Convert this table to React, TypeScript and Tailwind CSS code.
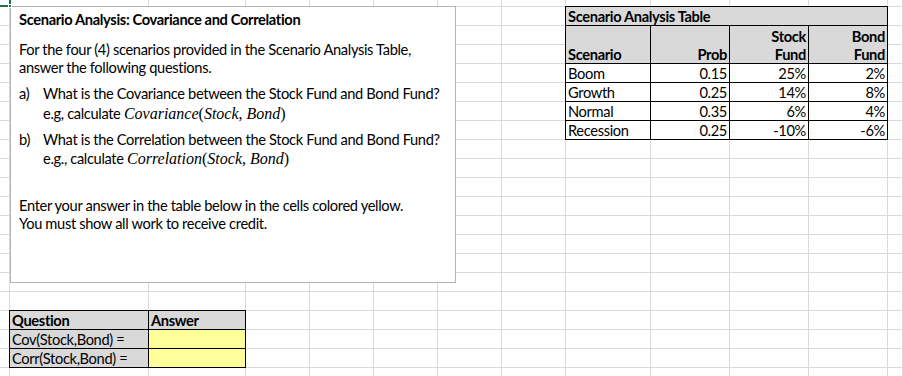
import React from 'react';

// spreadsheet layout: 13 columns, one short strip row then 19px rows
const TOTAL_CELLS = 13 * 21;
const USED_CELLS = 4 * 7 + 2 * 3;

const scenarios = [
  { name: 'Boom', prob: '0.15', stock: '25%', bond: '2%' },
  { name: 'Growth', prob: '0.25', stock: '14%', bond: '8%' },
  { name: 'Normal', prob: '0.35', stock: '6%', bond: '4%' },
  { name: 'Recession', prob: '0.25', stock: '-10%', bond: '-6%' },
];

const MathExpr: React.FC<{ fn: string }> = ({ fn }) => (
  <span className="font-['Liberation_Serif',serif] text-[16px] tracking-normal">
    <i>{fn}</i>(<i>Stock</i>, <i>Bond</i>)
  </span>
);

const ScenarioTable: React.FC = () => (
  <div className="col-start-9 col-span-4 row-start-2 row-span-7 -mt-px -ml-px z-10 border-l border-t border-black grid grid-cols-[85px_79px_79px_79px] grid-rows-[19px_38px_19px_19px_19px_19px] bg-white leading-[17px]">
    <div className="col-span-4 bg-[#d9d9d9] border-r border-b border-black px-[2px] flex items-end font-bold">
      Scenario Analysis Table
    </div>
    <div className="bg-[#d9d9d9] border-r border-b border-black px-[2px] flex items-end font-bold">Scenario</div>
    <div className="bg-[#d9d9d9] border-r border-b border-black px-[2px] flex items-end justify-end font-bold">Prob</div>
    <div className="bg-[#d9d9d9] border-r border-b border-black px-[2px] flex flex-col items-end justify-end font-bold leading-[19px]">
      <span>Stock</span>
      <span className="leading-[17px]">Fund</span>
    </div>
    <div className="bg-[#d9d9d9] border-r border-b border-black px-[2px] flex flex-col items-end justify-end font-bold leading-[19px]">
      <span>Bond</span>
      <span className="leading-[17px]">Fund</span>
    </div>
    {scenarios.map((s) => (
      <React.Fragment key={s.name}>
        <div className="border-r border-b border-black px-[2px] flex items-end">{s.name}</div>
        <div className="border-r border-b border-black px-[2px] flex items-end justify-end">{s.prob}</div>
        <div className="border-r border-b border-black px-[2px] flex items-end justify-end">{s.stock}</div>
        <div className="border-r border-b border-black px-[2px] flex items-end justify-end">{s.bond}</div>
      </React.Fragment>
    ))}
  </div>
);

const AnswerTable: React.FC = () => (
  <div className="col-start-2 col-span-2 row-start-18 row-span-3 -mt-px -ml-px z-10 border-l border-t border-black grid grid-cols-[139px_97px] grid-rows-[19px_19px_19px] leading-[17px]">
    <div className="bg-[#d9d9d9] border-r border-b border-black px-[2px] flex items-end font-bold">Question</div>
    <div className="bg-[#d9d9d9] border-r border-b border-black px-[2px] flex items-end font-bold">Answer</div>
    <div className="bg-[#d9d9d9] border-r border-b border-black px-[2px] flex items-end">Cov(Stock,Bond) =</div>
    <div className="bg-[#ffff99] border-r border-b border-black" />
    <div className="bg-[#d9d9d9] border-r border-b border-black px-[2px] flex items-end">Corr(Stock,Bond) =</div>
    <div className="bg-[#ffff99] border-r border-b border-black" />
  </div>
);

const InstructionBox: React.FC = () => (
  <div className="absolute left-[10px] top-[6px] w-[446px] h-[277px] z-20 bg-white border border-[#b4b4b4] pl-[8px] pt-[4px] leading-[18px]">
    <div className="font-bold">Scenario Analysis: Covariance and Correlation</div>
    <div className="mt-[12px]">
      <div>For the four (4) scenarios provided in the Scenario Analysis Table,</div>
      <div>answer the following questions.</div>
    </div>
    <div className="mt-[8px] flex">
      <div className="w-[24px] shrink-0">a)</div>
      <div>
        <div>What is the Covariance between the Stock Fund and Bond Fund?</div>
        <div className="mt-px leading-[20px]">
          e.g, calculate <MathExpr fn="Covariance" />
        </div>
      </div>
    </div>
    <div className="mt-[7px] flex">
      <div className="w-[24px] shrink-0">b)</div>
      <div>
        <div>What is the Correlation between the Stock Fund and Bond Fund?</div>
        <div className="leading-[20px]">
          e.g., calculate <MathExpr fn="Correlation" />
        </div>
      </div>
    </div>
    <div className="mt-[28px]">
      <div>Enter your answer in the table below in the cells colored yellow.</div>
      <div>You must show all work to receive credit.</div>
    </div>
  </div>
);

export default function App() {
  return (
    <div className="relative w-[903px] h-[376px] overflow-hidden bg-white text-black text-[14.67px] tracking-[-0.35px] font-['Lato',sans-serif]">
      <div className="grid grid-cols-[10px_139px_97px_64px_64px_64px_64px_64px_85px_79px_79px_79px_1fr] grid-rows-[7px_repeat(20,19px)]">
        <ScenarioTable />
        <AnswerTable />
        {Array.from({ length: TOTAL_CELLS - USED_CELLS }).map((_, i) => (
          <div key={i} className="border-r border-b border-[#d9d9d9]" />
        ))}
      </div>
      <InstructionBox />
      {/* selected cell corner, top left */}
      <div className="absolute left-0 top-[5px] w-[8px] h-[2px] bg-[#217346] z-30" />
      <div className="absolute left-[9px] top-0 w-[2px] h-[4px] bg-[#217346] z-30" />
      <div className="absolute left-[8px] top-[4px] w-[4px] h-[4px] bg-[#217346] border border-white z-30" />
    </div>
  );
}
